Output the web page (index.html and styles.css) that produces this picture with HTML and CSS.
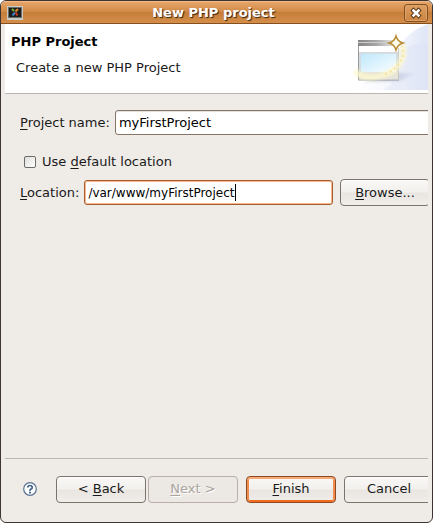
FILE: index.html
```html
<!DOCTYPE html>
<html lang="en">
<head>
<meta charset="utf-8">
<title>New PHP project</title>
<link rel="stylesheet" href="styles.css">
</head>
<body>
<div class="window">
  <header class="titlebar">
    <svg class="app-icon" width="16" height="14" viewBox="0 0 16 14" aria-hidden="true">
      <rect x=".5" y=".5" width="15" height="13" fill="#6a6c68" stroke="#c9cbc7"/>
      <rect x="2" y="2" width="12" height="9" fill="#1b1b1b"/>
      <path d="M5 3l2 2" stroke="#73b52c" stroke-width="2"/>
      <path d="M11 3L8.500 5.500" stroke="#e08a2a" stroke-width="2"/>
      <path d="M5.500 9.500L8 6.500" stroke="#3b7fc0" stroke-width="2"/>
      <path d="M8.500 6.500l2 3" stroke="#c43a2a" stroke-width="2"/>
      <path d="M1 12.500h14" stroke="#c4c6c2"/>
    </svg>
    <h1 class="title">New PHP project</h1>
    <button class="close" type="button" aria-label="Close">
      <svg width="12" height="12" viewBox="0 0 12 12" aria-hidden="true">
        <path d="M3.500 3.500l5 5M8.500 3.500l-5 5" stroke="#5b3517" stroke-width="4.500" stroke-linecap="square"/>
        <path d="M3.500 3.500l5 5M8.500 3.500l-5 5" stroke="#fff" stroke-width="2.500" stroke-linecap="square"/>
      </svg>
    </button>
  </header>
  <form class="dialog">
    <div class="banner">
      <div class="banner-text">
        <h2 class="heading">PHP Project</h2>
        <p class="description">Create a new PHP Project</p>
      </div>
      <svg class="banner-art" width="75" height="66" viewBox="0 0 75 66" aria-hidden="true">
        <defs>
          <linearGradient id="sky" x1="0" y1="0" x2="1" y2="0"><stop offset="0" stop-color="#fff"/><stop offset=".6" stop-color="#f3f6fc"/><stop offset="1" stop-color="#dfe6f6"/></linearGradient>
          <linearGradient id="bar" x1="0" y1="0" x2="1" y2="0"><stop offset="0" stop-color="#858585"/><stop offset=".5" stop-color="#a8a8a8"/><stop offset="1" stop-color="#eee"/></linearGradient>
          <linearGradient id="pane" x1="0" y1="0" x2="1" y2="1"><stop offset="0" stop-color="#bfe8fc"/><stop offset="1" stop-color="#fbfdff"/></linearGradient>
          <linearGradient id="shade" x1="0" y1="0" x2="1" y2="0"><stop offset="0" stop-color="#aeb2c8"/><stop offset="1" stop-color="#dfe5f6"/></linearGradient>
          <filter id="soft" x="-30%" y="-30%" width="160%" height="160%"><feGaussianBlur stdDeviation="1.500"/></filter>
        </defs>
        <path d="M0 66C15 60 36 34 49 18Q60 5 75 0V66Z" fill="url(#sky)"/>
        <path d="M47 26Q60 20 75 18V66H30Q48 56 47 26Z" fill="#dbe2f5" opacity=".4"/>
        <path d="M10 57L46 49 64 49 47 57Z" fill="url(#shade)" filter="url(#soft)"/>
        <rect x="5" y="17" width="41" height="39" fill="#fff"/>
        <rect x="5" y="16" width="38" height="6" fill="url(#bar)"/>
        <path d="M5 18.500h33" stroke="#ccc"/>
        <path d="M5.500 22V56H46" fill="none" stroke="#999"/>
        <path d="M45.500 24V56" stroke="#c8c8bd"/>
        <rect x="6" y="28" width="39" height="20" fill="#d4dce1"/>
        <rect x="8" y="30" width="35" height="18" fill="url(#pane)"/>
        <rect x="6" y="48" width="39" height="7" fill="#e6e3da"/>
        <path d="M2 47Q9 55 23 53Q39 51 47 39Q53 30 49 21" fill="none" stroke="#fdf8cd" stroke-width="6" opacity=".8" filter="url(#soft)"/>
        <path d="M32 50Q43 46 48 36Q52 29 49 22" fill="none" stroke="#f7e3a0" stroke-width="2" stroke-dasharray="2 3"/>
        <path d="M43 12Q44.500 17.500 50 19Q44.500 20.500 43 26Q41.500 20.500 36 19Q41.500 17.500 43 12Z" fill="#fffbea" stroke="#b98b35" stroke-width="1.500"/>
      </svg>
    </div>
    <div class="fields">
      <div class="row name-row">
        <label for="name"><u>P</u>roject name:</label>
        <input class="text name" id="name" type="text" value="myFirstProject">
      </div>
      <div class="check-row">
        <input class="check" id="default" type="checkbox">
        <label for="default">Use <u>d</u>efault location</label>
      </div>
      <div class="row location-row">
        <label for="location"><u>L</u>ocation:</label>
        <div class="field">
          <input class="text active" id="location" type="text" value="/var/www/myFirstProject">
          <span class="caret"></span>
        </div>
        <button class="button browse" type="button"><u>B</u>rowse...</button>
      </div>
    </div>
    <div class="actions">
      <button class="help" type="button" aria-label="Help">
        <svg width="14" height="14" viewBox="0 0 14 14" aria-hidden="true">
          <circle cx="7" cy="7" r="6.300" fill="#fff" stroke="#587193" stroke-width="1.200"/>
          <path d="M4.800 5.500Q4.800 3.500 7 3.500T9.200 5.400Q9.200 6.500 8 7T7 8.800" fill="none" stroke="#3d5f8c" stroke-width="1.700"/>
          <rect x="6" y="9.700" width="2" height="1.700" fill="#3d5f8c"/>
        </svg>
      </button>
      <button class="button" type="button">&lt; <u>B</u>ack</button>
      <button class="button next" type="button" disabled><u>N</u>ext &gt;</button>
      <button class="button finish" type="submit"><u>F</u>inish</button>
      <button class="button" type="button">Cancel</button>
    </div>
  </form>
</div>
</body>
</html>
```
FILE: styles.css
```css
* {
  box-sizing: border-box;
}

body {
  margin: 0;
  background: #fff;
  color: #1a1a1a;
  font: 13px/16px "DejaVu Sans", sans-serif;
}

h1, h2, p {
  margin: 0;
}

button, input {
  font: inherit;
  color: inherit;
}

u {
  text-underline-offset: 2px;
  text-decoration-thickness: 1px;
}

.window {
  display: flex;
  flex-direction: column;
  min-height: 100vh;
  border: 1px solid #3e3532;
  border-radius: 6px;
  background: #efebe7;
  overflow: hidden;
}

.titlebar {
  display: flex;
  align-items: center;
  height: 23px;
  padding: 0 4px 0 6px;
  border-top: 1px solid #f0b985;
  border-bottom: 1px solid #84501f;
  background: linear-gradient(#e5a469, #d18b47 45%, #c67f3a 50%, #d58e4a);
}

.app-icon {
  flex: none;
}

.title {
  flex: 1;
  color: #fff;
  font-size: 13px;
  line-height: 20px;
  text-align: center;
  text-shadow: 1px 1px 1px #332211;
}

.close {
  display: grid;
  place-items: center;
  width: 24px;
  height: 18px;
  padding: 0;
  border: 1px solid #85501f;
  border-radius: 3px;
  background: linear-gradient(#dda064, #cb8440);
  box-shadow: inset 0 0 0 1px #dda26b;
}

.dialog {
  display: flex;
  flex: 1;
  flex-direction: column;
  margin: 0 4px;
  overflow: hidden;
}

.banner {
  display: flex;
  justify-content: space-between;
  height: 70px;
  border-bottom: 1px solid #b9b5b2;
  background: #fff;
}

.banner-text {
  padding: 9px 6px;
}

.heading {
  color: #000;
  font-size: 13px;
  line-height: 17px;
}

.description {
  padding: 10px 5px;
}

.fields {
  flex: 1;
  padding: 16px 0 16px 15px;
}

.row {
  display: flex;
  align-items: center;
}

.name-row {
  gap: 5px;
  margin-right: -4px;
}

.text {
  width: 100%;
  min-width: 0;
  height: 25px;
  padding: 0 3px;
  border: 1px solid #857568;
  border-radius: 3px;
  outline: 0;
  background: #fff;
  color: #000;
  box-shadow: inset 0 1px #e4e1de;
}

.name {
  flex: 1;
}

.active {
  border-color: #a95c2c;
  font-size: 12px;
  box-shadow: inset 0 0 0 1px #f6b98d;
}

.field {
  position: relative;
  flex: 1;
}

.caret {
  position: absolute;
  top: 4px;
  left: 151px;
  width: 1px;
  height: 17px;
  background: #000;
}

.check-row {
  display: flex;
  align-items: center;
  gap: 6px;
  padding: 19px 4px 9px;
}

.check {
  appearance: none;
  width: 12px;
  height: 12px;
  margin: 0;
  border: 1px solid #6e6a66;
  border-radius: 2px;
  background: linear-gradient(135deg, #dedede, #fff);
}

.location-row {
  gap: 5px;
  margin-right: -2px;
}

.browse {
  margin-left: 2px;
}

.button {
  flex: none;
  width: 90px;
  height: 27px;
  padding: 0;
  border: 1px solid #7a746c;
  border-radius: 4px;
  background: linear-gradient(#f9f8f6, #f2f0ed 49%, #e9e5e1 51%, #f0edea);
  color: #1a1a1a;
  box-shadow: inset 0 1px #fff;
}

.actions {
  display: flex;
  align-items: center;
  height: 64px;
  padding: 0 0 3px 18px;
  border-top: 1px solid #b9b5b2;
}

.help {
  display: grid;
  width: 14px;
  margin-right: 19px;
  padding: 0;
  border: 0;
  background: none;
}

.button.next {
  margin: 0 8px 0 2px;
  border-color: #b8aea5;
  background: #ece8e4;
  color: #aaa5a0;
  text-shadow: 1px 1px #fff;
  box-shadow: none;
}

.button.finish {
  margin-right: 8px;
  border-color: #8b4a24;
  box-shadow: inset 0 2px #f8aa76, inset 2px 0 #f28c4c, inset -2px 0 #f28c4c, inset 0 -2px #f26a1b;
}

.button.browse {
  margin-left: 2px;
}
```
